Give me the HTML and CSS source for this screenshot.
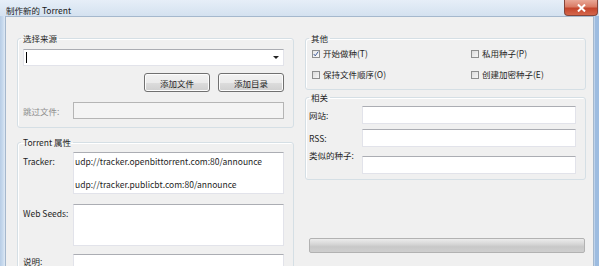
FILE: index.html
```html
<!DOCTYPE html>
<html lang="zh-CN">
<head>
  <meta charset="UTF-8">
  <title>制作新的 Torrent</title>
  <link rel="stylesheet" href="styles.css">
</head>
<body>
  <div class="window">
    <div class="titlebar">
      <span class="title">制作新的 Torrent</span>
      <span class="close">
        <svg width="9" height="8" viewBox="0 0 9 8"><path d="M1 0.5 L8 7.5 M8 0.5 L1 7.5" stroke="#fff" stroke-width="2"/></svg>
      </span>
    </div>
    <div class="client">
      <div class="col left">
        <fieldset class="group source">
          <legend>选择来源</legend>
          <div class="combo"><span class="caret"></span><span class="arrow"></span></div>
          <div class="btnrow">
            <button>添加文件</button>
            <button>添加目录</button>
          </div>
          <div class="row skip">
            <label class="disabled">跳过文件:</label>
            <div class="input off"></div>
          </div>
        </fieldset>
        <fieldset class="group props">
          <legend>Torrent 属性</legend>
          <div class="row">
            <label>Tracker:</label>
            <div class="input area">
              <div>udp://tracker.openbittorrent.com:80/announce</div>
              <div>&nbsp;</div>
              <div>udp://tracker.publicbt.com:80/announce</div>
            </div>
          </div>
          <div class="row">
            <label>Web Seeds:</label>
            <div class="input area"></div>
          </div>
          <div class="row last">
            <label>说明:</label>
            <div class="input area"></div>
          </div>
        </fieldset>
      </div>
      <div class="col right">
        <fieldset class="group other">
          <legend>其他</legend>
          <div class="checks">
            <div class="check"><span class="box on"><svg width="8" height="8" viewBox="0 0 8 8"><path d="M1 4 L3 6.5 L7 0.8" stroke="#3d5a9a" stroke-width="1.3" fill="none"/></svg></span>开始做种(T)</div>
            <div class="check"><span class="box"></span>私用种子(P)</div>
            <div class="check"><span class="box"></span>保持文件顺序(O)</div>
            <div class="check"><span class="box"></span>创建加密种子(E)</div>
          </div>
        </fieldset>
        <fieldset class="group related">
          <legend>相关</legend>
          <div class="row">
            <label>网站:</label>
            <div class="input"></div>
          </div>
          <div class="row">
            <label>RSS:</label>
            <div class="input"></div>
          </div>
          <div class="row top">
            <label>类似的种子:</label>
            <div class="input"></div>
          </div>
        </fieldset>
        <div class="progress"></div>
      </div>
    </div>
  </div>
</body>
</html>
```

FILE: styles.css
```css
body {
  margin: 0;
  background: #fff;
  font-family: "Noto Sans CJK SC", sans-serif;
  font-size: 8.5px;
  color: #1e1e1e;
}
.window {
  width: 599px;
  height: 266px;
  overflow: hidden;
  display: flex;
  flex-direction: column;
  background: linear-gradient(90deg, #b7cde6 0, #c9dbee 3px, #dfe9f5 5px, #dfe9f5 594px, #9dbce0 595px, #9dbce0 598px);
}
.titlebar {
  height: 21px;
  display: flex;
  align-items: flex-start;
  background: linear-gradient(180deg, #e6eef8 0%, #dde8f4 50%, #d4e1f0 100%);
}
.title {
  padding: 5px 0 0 6px;
  line-height: 11px;
  color: #1a1a1a;
}
.close {
  margin-left: auto;
  margin-right: 1px;
  width: 34px;
  height: 16px;
  box-sizing: border-box;
  border: 1px solid #84453a;
  border-top: none;
  border-radius: 0 0 4px 4px;
  background: linear-gradient(180deg, #e9a897 0%, #d97c66 45%, #c4452c 55%, #d5674c 100%);
  display: flex;
  align-items: center;
  justify-content: center;
}
.client {
  flex: 1;
  margin: 0 5px;
  background: #f0f0f0;
  border: 1px solid #a5b8cd;
  border-bottom: none;
  display: flex;
  gap: 11px;
  padding: 15px 7px 0 11px;
}
.col {
  display: flex;
  flex-direction: column;
}
.left {
  width: 277px;
}
.right {
  width: 281px;
}
.group {
  margin: 0;
  border: 1px solid #d5dfe5;
  border-radius: 3px;
  box-shadow: inset 1px 1px #fff;
  padding: 0 9px 0 5px;
}
.group legend {
  padding: 0 2px;
  margin-left: -2px;
  line-height: 12px;
}
.source {
  height: 96px;
  box-sizing: border-box;
}
.combo {
  margin-top: 5px;
  height: 17px;
  box-sizing: border-box;
  background: #fff;
  border: 1px solid #e2e3ea;
  border-top-color: #abadb3;
  position: relative;
}
.caret {
  position: absolute;
  left: 2px;
  top: 2px;
  width: 1px;
  height: 11px;
  background: #000;
}
.arrow {
  position: absolute;
  right: 4px;
  top: 6px;
  border: 3px solid transparent;
  border-top: 3px solid #222;
  border-bottom: none;
}
.btnrow {
  display: flex;
  justify-content: flex-end;
  gap: 8px;
  margin-top: 7px;
}
button {
  width: 66px;
  height: 19px;
  padding: 0;
  font: inherit;
  color: #1e1e1e;
  border: 1px solid #707070;
  border-radius: 3px;
  background: linear-gradient(180deg, #f2f2f2 0%, #ebebeb 50%, #dddddd 51%, #cfcfcf 100%);
  box-shadow: inset 0 0 0 1px #fcfcfc;
}
.row {
  display: flex;
  align-items: flex-start;
}
label {
  width: 50px;
  flex: none;
  line-height: 11px;
  padding-top: 3px;
  white-space: nowrap;
}
.disabled {
  color: #8d8d8d;
}
.input {
  flex: 1;
  height: 17px;
  box-sizing: border-box;
  background: #fff;
  border: 1px solid #e2e3ea;
  border-top-color: #abadb3;
}
.input.off {
  background: #f4f4f4;
  border-color: #b5b5b5;
}
.skip {
  margin-top: 10px;
}
.skip label {
  padding-top: 4px;
}
.props {
  margin-top: 8px;
  flex: 1;
}
.props .row {
  margin-bottom: 10px;
}
.props .row:nth-of-type(2) {
  margin-bottom: 8px;
}
.props legend + .row {
  margin-top: 4px;
}
.props label {
  padding-top: 4px;
}
.props .last label {
  padding-top: 2px;
}
.input.area {
  height: 42px;
  padding: 3px 0 0 1px;
  line-height: 11.3px;
  overflow: hidden;
}
.other {
  height: 58px;
  box-sizing: border-box;
}
.checks {
  display: grid;
  grid-template-columns: 159px 1fr;
  row-gap: 10px;
  margin-top: 4px;
  padding-left: 1px;
}
.check {
  display: flex;
  align-items: center;
  gap: 3px;
  line-height: 11px;
}
.box {
  width: 8px;
  height: 8px;
  box-sizing: border-box;
  border: 1px solid #8e8f8f;
  background: linear-gradient(135deg, #dcdcdc, #f6f6f6);
  display: flex;
  align-items: center;
  justify-content: center;
}
.box.on {
  background: linear-gradient(135deg, #e6e6e6, #fafafa);
}
.related {
  margin-top: 1px;
  height: 89px;
  box-sizing: border-box;
  padding: 0 9px 0 3px;
}
.related legend {
  margin-left: 0;
}
.related .input {
  height: 18px;
}
.related label {
  width: 53px;
  padding-top: 4px;
}
.related .row {
  margin-top: 5px;
}
.related legend + .row {
  margin-top: 3px;
}
.related .row.top {
  margin-top: 9px;
}
.related .row.top label {
  padding-top: 0;
  margin-top: -6px;
}
.progress {
  margin: 58px 0 0 4px;
  width: 276px;
  height: 15px;
  box-sizing: border-box;
  border: 1px solid #b2b2b2;
  border-radius: 2px;
  background: linear-gradient(180deg, #ececec 0%, #d6d6d6 40%, #c8c8c8 60%, #cfcfcf 100%);
}
```
